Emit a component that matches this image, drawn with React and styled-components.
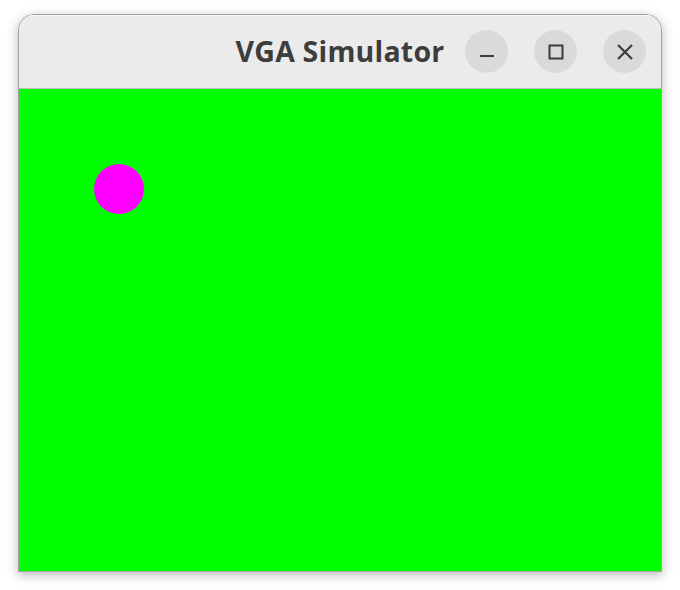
import React from "react";
import styled, { createGlobalStyle } from "styled-components";

const GlobalStyle = createGlobalStyle`
  html, body {
    margin: 0;
    padding: 0;
    background: #ffffff;
  }
`;

export default function App() {
  return (
    <>
      <GlobalStyle />
      <Desktop>
        <Window>
          <TitleBar>
            <span />
            <Title>VGA Simulator</Title>
            <Controls>
              <WinButton aria-label="Minimize">
                <svg width="16" height="16" viewBox="0 0 16 16">
                  <rect x="1" y="11" width="14" height="2" fill="#3b3b3b" />
                </svg>
              </WinButton>
              <WinButton aria-label="Maximize">
                <svg width="16" height="16" viewBox="0 0 16 16">
                  <rect x="1.5" y="1.5" width="13" height="13" fill="none" stroke="#3b3b3b" strokeWidth="2" />
                </svg>
              </WinButton>
              <WinButton aria-label="Close">
                <svg width="18" height="18" viewBox="0 0 18 18">
                  <path d="M2 2 L16 16 M16 2 L2 16" stroke="#3b3b3b" strokeWidth="2.2" />
                </svg>
              </WinButton>
            </Controls>
          </TitleBar>
          <Screen>
            <Ball style={{ left: 75, top: 75 }} />
          </Screen>
        </Window>
      </Desktop>
    </>
  );
}

const Desktop = styled.div`
  width: 680px;
  height: 590px;
  padding: 14px 0 0 18px;
  box-sizing: border-box;
`;

const Window = styled.div`
  width: 644px;
  height: 558px;
  box-sizing: border-box;
  display: flex;
  flex-direction: column;
  border: 1px solid #a3a3a3;
  border-radius: 16px 16px 0 0;
  overflow: hidden;
  box-shadow: 0 3px 12px rgba(0, 0, 0, 0.28);
  background: #ebebeb;
`;

const TitleBar = styled.div`
  height: 74px;
  flex: none;
  display: grid;
  grid-template-columns: 1fr auto 1fr;
  align-items: center;
  padding: 0 15px 0 15px;
  box-sizing: border-box;
  background: #ebebeb;
  border-bottom: 1px solid #bcbcbc;
  border-top: 1px solid #f6f6f6;
`;

const Title = styled.div`
  font-family: "Open Sans", "DejaVu Sans", sans-serif;
  font-weight: 700;
  font-size: 28.5px;
  color: #3d3d3d;
  letter-spacing: 0.2px;
  margin-top: -2px;
`;

const Controls = styled.div`
  display: flex;
  justify-content: flex-end;
  gap: 26px;
  margin-top: -1px;
`;

const WinButton = styled.div`
  width: 43px;
  height: 43px;
  border-radius: 50%;
  background: #dadada;
  display: flex;
  align-items: center;
  justify-content: center;
`;

const Screen = styled.div`
  position: relative;
  flex: 1;
  background: #00ff00;
`;

const Ball = styled.div`
  position: absolute;
  width: 50px;
  height: 50px;
  border-radius: 50%;
  background: #ff00ff;
`;
